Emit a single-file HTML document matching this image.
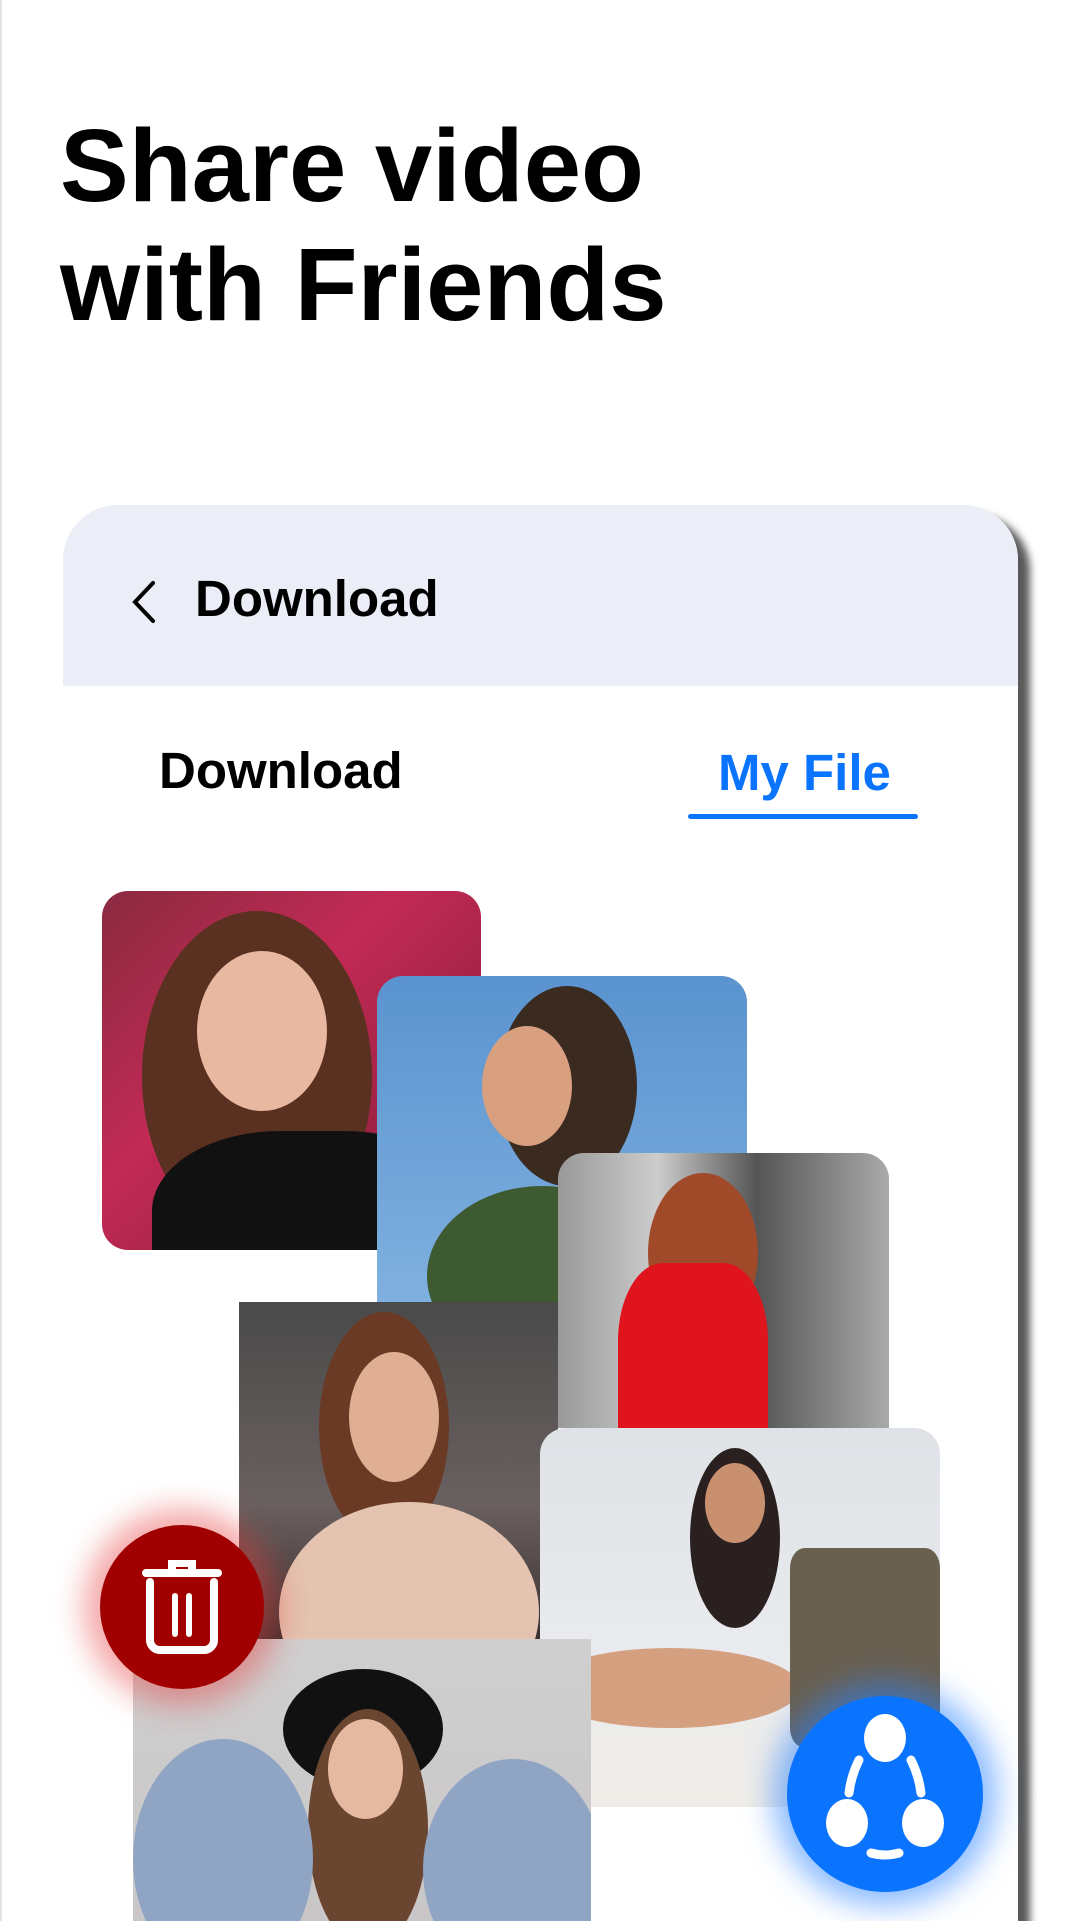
<!DOCTYPE html>
<html style="width:1081px;height:1921px;overflow:hidden"><head><meta charset="utf-8"><style>
*{margin:0;padding:0;box-sizing:border-box}
body{width:1081px;height:1921px;background:#fff;position:relative;overflow:hidden;font-family:"Liberation Sans",sans-serif;border-left:2px solid #e4e4e4}
.t{position:absolute;left:58px;font-weight:bold;font-size:103px;color:#000;letter-spacing:0px;line-height:1}
.card{position:absolute;left:61px;top:505px;width:955px;height:1416px;background:#fff;border-radius:55px 55px 0 0;box-shadow:12px 10px 8px rgba(0,0,0,.65);overflow:hidden}
.hdr{position:absolute;left:0;top:0;width:100%;height:181px;background:#eceef7}
.a{position:absolute;font-weight:bold;font-size:51px}
.p{position:absolute;overflow:hidden}
.p div{position:absolute;border-radius:50%}
</style></head><body>
<div class="t" style="top:114px">Share video</div>
<div class="t" style="top:233px">with Friends</div>
<div class="card">
 <div class="hdr"></div>
 <svg style="position:absolute;left:66px;top:75px" width="30" height="44"><path d="M24 3 L6 22 L24 41" fill="none" stroke="#000" stroke-width="4" stroke-linecap="round"/></svg>
 <div class="a" style="left:132px;top:64px">Download</div>
 <div class="a" style="left:96px;top:236px">Download</div>
 <div class="a" style="left:655px;top:238px;color:#0a74ff">My File</div>
 <div style="position:absolute;left:625px;top:309px;width:230px;height:5px;background:#0a74ff;border-radius:3px"></div>
</div>
<div class="p" style="left:100px;top:891px;width:379px;height:359px;border-radius:26px;background:linear-gradient(135deg,#8a2a40,#c22a55 40%,#7a1a30)">
 <div style="left:40px;top:20px;width:230px;height:330px;background:#5a3020"></div>
 <div style="left:95px;top:60px;width:130px;height:160px;background:#e8b9a0"></div>
 <div style="left:50px;top:240px;width:320px;height:200px;background:#111;border-radius:40%"></div>
</div>
<div class="p" style="left:375px;top:976px;width:370px;height:326px;border-radius:26px 26px 0 0;background:linear-gradient(#5a93cf,#7fb0df)">
 <div style="left:120px;top:10px;width:140px;height:200px;background:#3a2a20"></div>
 <div style="left:105px;top:50px;width:90px;height:120px;background:#d9a080"></div>
 <div style="left:50px;top:210px;width:230px;height:180px;background:#3d5a30"></div>
</div>
<div class="p" style="left:556px;top:1153px;width:331px;height:275px;border-radius:26px 26px 0 0;background:linear-gradient(90deg,#999,#ccc 30%,#555 60%,#aaa)">
 <div style="left:90px;top:20px;width:110px;height:160px;background:#a04a2a"></div>
 <div style="left:60px;top:110px;width:150px;height:260px;background:#e0141c;border-radius:30%"></div>
</div>
<div class="p" style="left:237px;top:1302px;width:319px;height:337px;background:linear-gradient(#4a4a4a,#6a6060 60%,#3a3030)">
 <div style="left:80px;top:10px;width:130px;height:230px;background:#6a3a25"></div>
 <div style="left:110px;top:50px;width:90px;height:130px;background:#e0ae92"></div>
 <div style="left:40px;top:200px;width:260px;height:220px;background:#e4c4b0"></div>
</div>
<div class="p" style="left:538px;top:1428px;width:400px;height:379px;border-radius:26px;background:linear-gradient(#dfe2e6,#e9ebee 60%,#f0ede8)">
 <div style="left:150px;top:20px;width:90px;height:180px;background:#2a2020"></div>
 <div style="left:165px;top:35px;width:60px;height:80px;background:#c99070"></div>
 <div style="left:0;top:220px;width:260px;height:80px;background:#d4a080"></div>
 <div style="left:250px;top:120px;width:150px;height:200px;background:#6a6050;border-radius:10%"></div>
</div>
<div class="p" style="left:131px;top:1639px;width:458px;height:282px;background:linear-gradient(#d0cfd0,#c8c6c6)">
 <div style="left:150px;top:30px;width:160px;height:120px;background:#111"></div>
 <div style="left:175px;top:70px;width:120px;height:240px;background:#6a4530"></div>
 <div style="left:195px;top:80px;width:75px;height:100px;background:#e5b8a0"></div>
 <div style="left:0;top:100px;width:180px;height:240px;background:#90a4c4"></div>
 <div style="left:290px;top:120px;width:180px;height:220px;background:#90a4c4"></div>
</div>
<div style="position:absolute;left:98px;top:1525px;width:164px;height:164px;border-radius:50%;background:#a00000;box-shadow:0 0 30px 16px rgba(230,60,60,.45)"></div>
<svg style="position:absolute;left:140px;top:1560px" width="80" height="96" viewBox="0 0 80 96"><path d="M30 10V3h20v7 M4 13h72" fill="none" stroke="#fff" stroke-width="8" stroke-linecap="round"/><path d="M8 22v58a10 10 0 0 0 10 10h44a10 10 0 0 0 10-10V22" fill="none" stroke="#fff" stroke-width="8" stroke-linecap="round"/><path d="M33 36v38M47 36v38" stroke="#fff" stroke-width="6" stroke-linecap="round"/></svg>
<div style="position:absolute;left:785px;top:1696px;width:196px;height:196px;border-radius:50%;background:#0a74ff;box-shadow:0 0 30px 14px rgba(40,130,255,.55)"></div>
<svg style="position:absolute;left:785px;top:1696px" width="196" height="196" viewBox="0 0 196 196"><ellipse cx="98" cy="42" rx="21" ry="24" fill="#fff"/><ellipse cx="60" cy="127" rx="21" ry="24" fill="#fff"/><ellipse cx="136" cy="127" rx="21" ry="24" fill="#fff"/><path d="M72 64 Q64 80 62 97 M124 64 Q132 80 134 97 M84 157 Q98 161 112 157" fill="none" stroke="#fff" stroke-width="9" stroke-linecap="round"/></svg>
</body></html>
